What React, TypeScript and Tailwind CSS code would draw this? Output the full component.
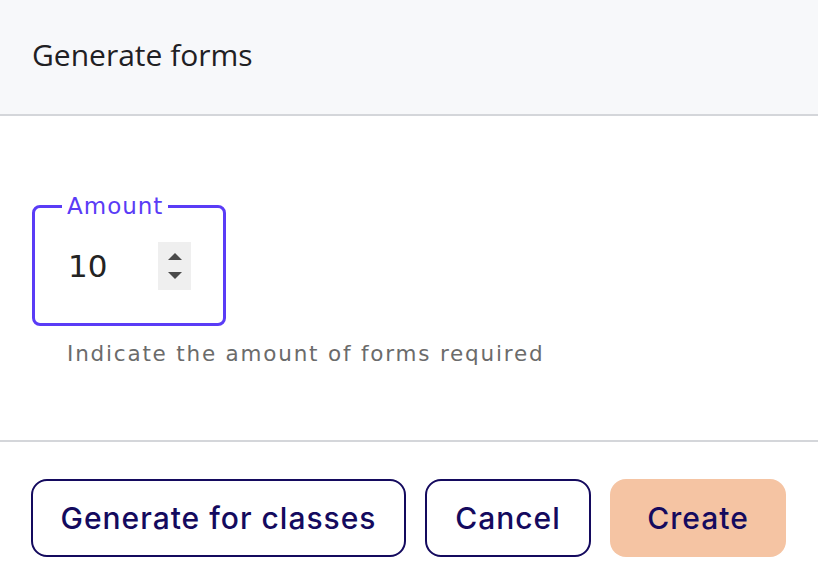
export default function App() {
  return (
    <div className="w-[818px] h-[588px] bg-white overflow-hidden flex flex-col">
      <header className="h-[116px] bg-[#f7f8fa] border-b-2 border-[#d4d6da] flex items-center px-8 shrink-0">
        <h1 className="text-[30px] text-[#1f2023] font-['Open_Sans',sans-serif] font-normal -mt-[6px]">Generate forms</h1>
      </header>

      <main className="h-[326px] border-b-2 border-[#d4d6da] px-8 pt-[79px] shrink-0">
        <fieldset className="w-[194px] h-[131px] border-[3px] border-[#5a3cf6] rounded-[8px] pl-[33px] pr-[32px]">
          <legend className="px-[5px] -ml-[6px] text-[23px] leading-[23px] text-[#5a3cf6] font-['DejaVu_Sans',sans-serif] font-normal tracking-[1px]">Amount</legend>
          <div className="flex items-center justify-between mt-[24px]">
            <span className="text-[31px] text-[#232323] font-['DejaVu_Sans',sans-serif] font-normal">10</span>
            <div className="w-[33px] h-[48px] bg-[#efefef] flex flex-col items-center justify-center gap-[12px]">
              <svg width="14" height="7" viewBox="0 0 14 7"><path d="M7 0L14 7H0Z" fill="#4a4a4a" /></svg>
              <svg width="14" height="7" viewBox="0 0 14 7"><path d="M0 0H14L7 7Z" fill="#4a4a4a" /></svg>
            </div>
          </div>
        </fieldset>
        <p className="mt-[12px] pl-[35px] text-[21.5px] text-[#6b6b6b] font-['DejaVu_Sans',sans-serif] font-normal tracking-[1.8px]">Indicate the amount of forms required</p>
      </main>

      <footer className="flex items-start gap-[19px] px-[31px] pt-[37px]">
        <button className="h-[78px] w-[375px] border-2 border-[#140a5e] rounded-[16px] text-[30px] text-[#140a5e] font-['Inter',sans-serif] font-medium tracking-[1px]">Generate for classes</button>
        <button className="h-[78px] w-[166px] border-2 border-[#140a5e] rounded-[16px] text-[30px] text-[#140a5e] font-['Inter',sans-serif] font-medium tracking-[1px]">Cancel</button>
        <button className="h-[78px] w-[176px] bg-[#f5c4a3] rounded-[16px] text-[30px] text-[#140a5e] font-['Inter',sans-serif] font-medium tracking-[1px]">Create</button>
      </footer>
    </div>
  )
}
